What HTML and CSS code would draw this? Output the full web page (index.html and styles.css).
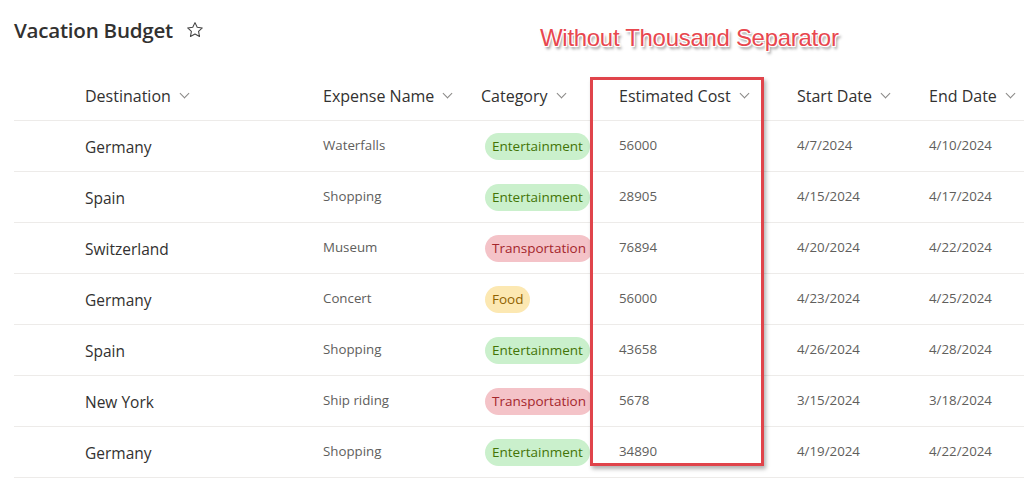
FILE: index.html
```html
<!DOCTYPE html>
<html>
<head>
<meta charset="utf-8">
<link rel="stylesheet" href="styles.css">
</head>
<body>
<div class="page">
  <div class="titlebar">
    <h1 class="title">Vacation Budget</h1>
    <svg class="star" width="18" height="18" viewBox="0 0 20 20"><path d="M10 1.8l2.45 5.2 5.65.7-4.15 3.9 1.05 5.6L10 14.45 4.95 17.2 6 11.6 1.85 7.7l5.65-.7z" fill="none" stroke="#444" stroke-width="1.2" stroke-linejoin="round"/></svg>
  </div>
  <div class="list">
    <div class="row head">
      <div class="c"></div>
      <div class="c"><span>Destination</span><i class="chev"></i></div>
      <div class="c"><span>Expense Name</span><i class="chev"></i></div>
      <div class="c"><span>Category</span><i class="chev"></i></div>
      <div class="c"><span>Estimated Cost</span><i class="chev"></i></div>
      <div class="c"><span>Start Date</span><i class="chev"></i></div>
      <div class="c"><span>End Date</span><i class="chev"></i></div>
    </div>
    <div class="row"><div class="c"></div><div class="c dest">Germany</div><div class="c sm">Waterfalls</div><div class="c"><span class="pill ent">Entertainment</span></div><div class="c sm">56000</div><div class="c sm">4/7/2024</div><div class="c sm">4/10/2024</div></div>
    <div class="row"><div class="c"></div><div class="c dest">Spain</div><div class="c sm">Shopping</div><div class="c"><span class="pill ent">Entertainment</span></div><div class="c sm">28905</div><div class="c sm">4/15/2024</div><div class="c sm">4/17/2024</div></div>
    <div class="row"><div class="c"></div><div class="c dest">Switzerland</div><div class="c sm">Museum</div><div class="c"><span class="pill tra">Transportation</span></div><div class="c sm">76894</div><div class="c sm">4/20/2024</div><div class="c sm">4/22/2024</div></div>
    <div class="row"><div class="c"></div><div class="c dest">Germany</div><div class="c sm">Concert</div><div class="c"><span class="pill food">Food</span></div><div class="c sm">56000</div><div class="c sm">4/23/2024</div><div class="c sm">4/25/2024</div></div>
    <div class="row"><div class="c"></div><div class="c dest">Spain</div><div class="c sm">Shopping</div><div class="c"><span class="pill ent">Entertainment</span></div><div class="c sm">43658</div><div class="c sm">4/26/2024</div><div class="c sm">4/28/2024</div></div>
    <div class="row"><div class="c"></div><div class="c dest">New York</div><div class="c sm">Ship riding</div><div class="c"><span class="pill tra">Transportation</span></div><div class="c sm">5678</div><div class="c sm">3/15/2024</div><div class="c sm">3/18/2024</div></div>
    <div class="row"><div class="c"></div><div class="c dest">Germany</div><div class="c sm">Shopping</div><div class="c"><span class="pill ent">Entertainment</span></div><div class="c sm">34890</div><div class="c sm">4/19/2024</div><div class="c sm">4/22/2024</div></div>
  </div>
  <div class="note">Without Thousand Separator</div>
  <div class="redbox"></div>
</div>
</body>
</html>
```

FILE: styles.css
```css
html, body { margin: 0; padding: 0; background: #fff; }
body { font-family: "Open Sans", "Noto Sans", sans-serif; color: #323130; }
.page { position: relative; width: 1024px; height: 479px; overflow: hidden; }
.titlebar { height: 71px; display: flex; align-items: flex-start; padding-left: 14px; box-sizing: border-box; padding-top: 15px; gap: 13px; }
.title { margin: 0; font-size: 20.6px; font-weight: 600; line-height: 30px; color: #323130; letter-spacing: -0.25px; }
.star { margin-top: 6px; }
.list { margin-left: 14px; }
.row { display: grid; grid-template-columns: 71px 238px 158px 138px 178px 132px 1fr; height: 51px; border-bottom: 1px solid #edebe9; box-sizing: border-box; }
.row.head { height: 50px; }
.c { display: flex; align-items: center; font-size: 14px; white-space: nowrap; }
.head .c { font-size: 16px; font-weight: 500; color: #323130; }
.chev { display: inline-block; width: 6px; height: 6px; border-right: 1px solid #8a8886; border-bottom: 1px solid #8a8886; transform: rotate(45deg); margin-left: 10px; margin-top: -5px; }
.dest { font-size: 15.5px; color: #323130; padding-top: 2px; }
.sm { font-size: 13.3px; color: #605e5c; padding-bottom: 3px; }
.pill { display: inline-block; margin-left: 4px; height: 27px; line-height: 27px; padding: 0 7px; border-radius: 14px; font-size: 13.5px; }
.ent { background: #caf0cc; color: #437406; }
.tra { background: #f4c3c8; color: #a4262c; }
.food { background: #fce8b2; color: #8f6200; }
.note { position: absolute; left: 540px; top: 24px; font-family: "Liberation Sans", Arial, sans-serif; font-size: 24px; color: #e8474f; text-shadow: -1px -1px 0 #fff, 1px -1px 0 #fff, -1px 1px 0 #fff, 1px 1px 0 #fff, 2px 3px 3px rgba(0,0,0,0.45); letter-spacing: -0.3px; }
.redbox { position: absolute; left: 590px; top: 77px; width: 168px; height: 383px; border: 3px solid #e0444b; box-shadow: 2px 3px 4px rgba(0,0,0,0.3); }
```
